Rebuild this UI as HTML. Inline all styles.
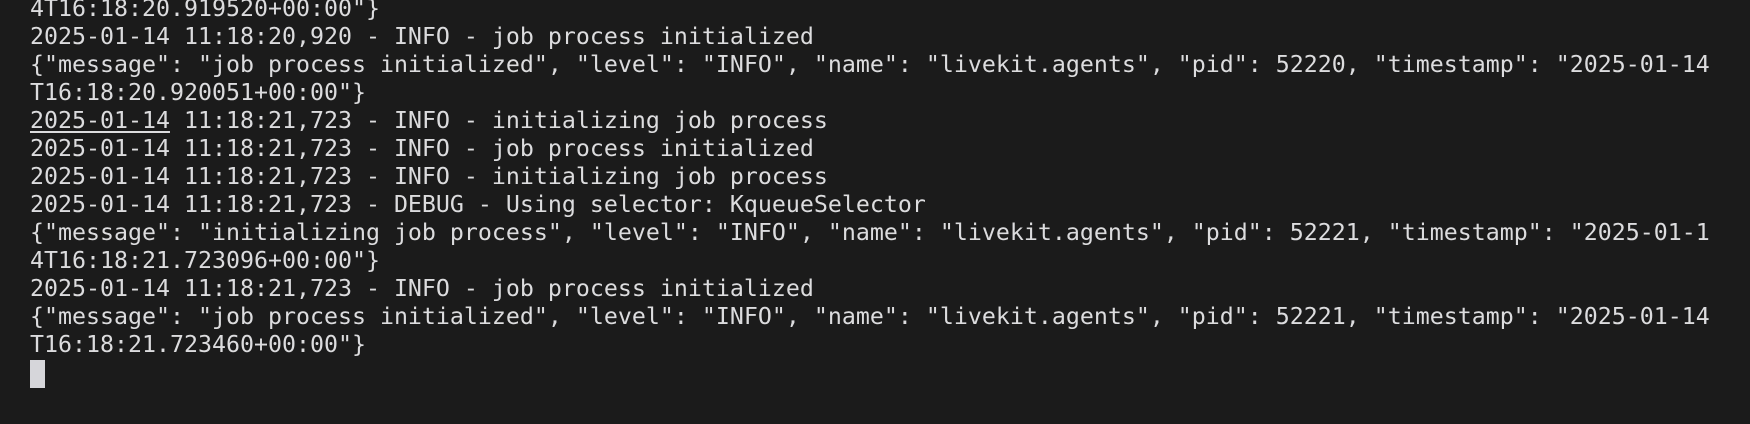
<!DOCTYPE html>
<html><head><style>
html,body{margin:0;padding:0;background:#1b1b1b;width:1750px;height:424px;overflow:hidden}
pre{position:absolute;left:30px;top:-5px;margin:0;font-family:"DejaVu Sans Mono","Liberation Mono",monospace;font-size:23.25px;line-height:28px;color:#dcdcde;white-space:pre}
.c{display:inline-block;width:15px;height:28px;background:#d6d6da;vertical-align:top;margin-top:1px}
u{text-decoration:underline;text-underline-offset:3px}
.f{position:absolute;left:638px;top:416px;font-family:"DejaVu Sans Mono",monospace;font-size:16px;color:#777}
</style></head><body>
<pre>4T16:18:20.919520+00:00"}
2025-01-14 11:18:20,920 - INFO - job process initialized
{"message": "job process initialized", "level": "INFO", "name": "livekit.agents", "pid": 52220, "timestamp": "2025-01-14
T16:18:20.920051+00:00"}
<u>2025-01-14</u> 11:18:21,723 - INFO - initializing job process
2025-01-14 11:18:21,723 - INFO - job process initialized
2025-01-14 11:18:21,723 - INFO - initializing job process
2025-01-14 11:18:21,723 - DEBUG - Using selector: KqueueSelector
{"message": "initializing job process", "level": "INFO", "name": "livekit.agents", "pid": 52221, "timestamp": "2025-01-1
4T16:18:21.723096+00:00"}
2025-01-14 11:18:21,723 - INFO - job process initialized
{"message": "job process initialized", "level": "INFO", "name": "livekit.agents", "pid": 52221, "timestamp": "2025-01-14
T16:18:21.723460+00:00"}
<span class="c"></span></pre>
</body></html>
